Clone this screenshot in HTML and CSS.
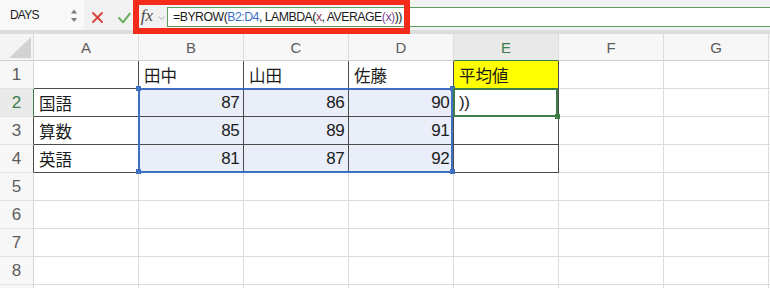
FILE: index.html
```html
<!DOCTYPE html>
<html lang="ja">
<head>
<meta charset="utf-8">
<link rel="stylesheet" href="styles.css">
</head>
<body>
<div class="app">
  <div class="toolbar">
    <div class="namebox">
      <span class="name">DAYS</span>
      <svg class="spin" width="7" height="14" viewBox="0 0 7 14"><polygon points="0,4.5 6,4.5 3,0.5" fill="#7a7a7a"/><polygon points="0,9 6,9 3,13" fill="#7a7a7a"/></svg>
    </div>
    <div class="tb-btn cancel"><svg width="27" height="30" viewBox="0 0 27 30"><path d="M9 13 L18 22 M18 13 L9 22" stroke="#d8433c" stroke-width="1.9" stroke-linecap="round"/></svg></div>
    <div class="tb-btn ok"><svg width="26" height="30" viewBox="0 0 26 30"><path d="M8 18 L12 22.3 L18.8 13.6" fill="none" stroke="#62ae55" stroke-width="1.9" stroke-linecap="round" stroke-linejoin="round"/></svg></div>
    <div class="fx">fx</div>
    <div class="chev"><svg width="9" height="30" viewBox="0 0 9 30"><path d="M1.5 16.5 L4.5 19.5 L7.5 16.5" fill="none" stroke="#b0b0b0" stroke-width="1"/></svg></div>
    <div class="formula"><span>=BYROW(</span><span class="ref">B2:D4</span><span>, LAMBDA(</span><span class="var1">x</span><span>, AVERAGE</span><span class="var2">(x)</span><span>))</span></div>
  </div>
  <div class="redbox"></div>

  <div class="sheet">
    <div class="c corner"><svg width="33" height="26" viewBox="0 0 33 26"><polygon points="9,24 31,24 31,3" fill="#d2d2d2"/></svg></div>
    <div class="c ch">A</div>
    <div class="c ch">B</div>
    <div class="c ch">C</div>
    <div class="c ch">D</div>
    <div class="c ch ch-act">E</div>
    <div class="c ch">F</div>
    <div class="c ch">G</div>
    <div class="c ch last"></div>

    <div class="c rh">1</div>
    <div class="c dr db"></div>
    <div class="c dr db">田中</div>
    <div class="c dr db">山田</div>
    <div class="c dr db">佐藤</div>
    <div class="c dr db yellow">平均値</div>
    <div class="c"></div>
    <div class="c"></div>
    <div class="c last"></div>

    <div class="c rh rh-act">2</div>
    <div class="c dr db">国語</div>
    <div class="c dr db sel num">87</div>
    <div class="c dr db sel num">86</div>
    <div class="c dr db sel num">90</div>
    <div class="c dr db paren">))</div>
    <div class="c"></div>
    <div class="c"></div>
    <div class="c last"></div>

    <div class="c rh rh-dark">3</div>
    <div class="c dr db">算数</div>
    <div class="c dr db sel num">85</div>
    <div class="c dr db sel num">89</div>
    <div class="c dr db sel num">91</div>
    <div class="c dr db"></div>
    <div class="c"></div>
    <div class="c"></div>
    <div class="c last"></div>

    <div class="c rh rh-dark">4</div>
    <div class="c dr db">英語</div>
    <div class="c dr db sel num">81</div>
    <div class="c dr db sel num">87</div>
    <div class="c dr db sel num">92</div>
    <div class="c dr db"></div>
    <div class="c"></div>
    <div class="c"></div>
    <div class="c last"></div>

    <div class="c rh">5</div>
    <div class="c"></div><div class="c"></div><div class="c"></div><div class="c"></div><div class="c"></div><div class="c"></div><div class="c"></div><div class="c last"></div>

    <div class="c rh">6</div>
    <div class="c"></div><div class="c"></div><div class="c"></div><div class="c"></div><div class="c"></div><div class="c"></div><div class="c"></div><div class="c last"></div>

    <div class="c rh">7</div>
    <div class="c"></div><div class="c"></div><div class="c"></div><div class="c"></div><div class="c"></div><div class="c"></div><div class="c"></div><div class="c last"></div>

    <div class="c rh">8</div>
    <div class="c"></div><div class="c"></div><div class="c"></div><div class="c"></div><div class="c"></div><div class="c"></div><div class="c"></div><div class="c last"></div>

    <div class="c rh"></div>
    <div class="c"></div><div class="c"></div><div class="c"></div><div class="c"></div><div class="c"></div><div class="c"></div><div class="c"></div><div class="c last"></div>

    <div class="selbox"></div>
    <div class="handle blue h-tl"></div>
    <div class="handle blue h-tr"></div>
    <div class="handle blue h-bl"></div>
    <div class="handle blue h-br"></div>
    <div class="actbox"></div>
    <div class="handle green h-act"></div>
  </div>
</div>
</body>
</html>
```

FILE: styles.css
```css
* { box-sizing: border-box; }
html, body { margin: 0; padding: 0; background: #ffffff; }
body { width: 770px; height: 288px; overflow: hidden; font-family: "Liberation Sans", "Noto Sans CJK JP", sans-serif; }
.app { position: relative; width: 770px; height: 288px; overflow: hidden; }

.toolbar {
  display: flex;
  height: 34px;
  background: #f1f1f1;
  border-bottom: 4px solid #dcdcdc;
}
.namebox {
  width: 84px;
  height: 30px;
  display: flex;
  align-items: center;
  justify-content: space-between;
  padding: 0 6px 0 10px;
  background: #f8f8f8;
}
.name { font-size: 12px; letter-spacing: -0.8px; color: #1a1a1a; }
.spin { display: block; margin-top: 1px; }
.tb-btn { height: 30px; }
.tb-btn svg { display: block; }
.cancel { width: 27px; }
.ok { width: 26px; }
.fx {
  width: 20px;
  height: 30px;
  display: flex;
  align-items: center;
  justify-content: center;
  padding-top: 2px;
  font-family: "Liberation Serif", serif;
  font-style: italic;
  font-size: 17px;
  color: #4a4a4a;
}
.chev { width: 9px; height: 30px; }
.chev svg { display: block; }
.formula {
  flex: 1;
  margin: 7px 0 0 1px;
  height: 20px;
  background: #ffffff;
  border: 1px solid #5f9b5f;
  border-right: none;
  padding-left: 5px;
  display: flex;
  align-items: center;
  font-size: 12.3px;
  letter-spacing: -0.5px;
  color: #1a1a1a;
  white-space: pre;
}
.formula .ref { color: #3a6fc4; }
.formula .var1 { color: #8e3a5e; }
.formula .var2 { color: #7b4597; }

.redbox {
  position: absolute;
  left: 133px;
  top: 0;
  width: 277px;
  height: 34px;
  border: 6px solid #f42a1a;
  border-top-width: 5px;
  pointer-events: none;
}

.sheet {
  position: relative;
  display: grid;
  grid-template-columns: 34px repeat(7, 105px) 1px;
  grid-template-rows: 27px repeat(9, 28px);
}
.c {
  border-right: 1px solid #dcdcdc;
  border-bottom: 1px solid #dcdcdc;
  display: flex;
  align-items: center;
  padding: 0 4px 0 5px;
  font-size: 16.5px;
  color: #1c1c1c;
  white-space: nowrap;
  overflow: hidden;
}
.c.last { border-right: none; padding: 0; }
.corner { background: #f4f4f4; padding: 0; border-bottom-color: #d0d0d0; }
.corner svg { display: block; }
.ch {
  background: #f7f7f7;
  justify-content: center;
  padding: 0;
  font-size: 15px;
  color: #5c5c5c;
  border-bottom-color: #cfcfcf;
  border-right-color: #dedede;
}
.ch-act {
  background: #e9e9e9;
  color: #3b7c47;
  border-bottom-color: #3e7a45;
}
.rh {
  background: #f7f7f7;
  justify-content: center;
  padding: 0;
  font-size: 17px;
  color: #5c5c5c;
  border-right-color: #d4d4d4;
  border-bottom-color: #e2e2e2;
}
.rh-act { background: #e9e9e9; color: #3b7c47; border-right-color: #3e7a45; }
.rh-dark { border-right-color: #4c4c4c; }
.dr { border-right-color: #4c4c4c; }
.db { border-bottom-color: #4c4c4c; }
.sel { background: #e9eef8; }
.num { justify-content: flex-end; padding-right: 4px; font-size: 17px; letter-spacing: -0.6px; }
.yellow { background: #ffff00; }
.paren { font-size: 17px; letter-spacing: -0.5px; }

.selbox {
  position: absolute;
  left: 138px;
  top: 54px;
  width: 315px;
  height: 85px;
  border: 2px solid #3f6fc0;
  pointer-events: none;
}
.actbox {
  position: absolute;
  left: 453px;
  top: 54px;
  width: 105px;
  height: 29px;
  border: 2px solid #3e7d45;
  pointer-events: none;
}
.handle { position: absolute; width: 5px; height: 5px; }
.handle.blue { background: #3f6fc0; }
.handle.green { background: #3e7d45; }
.h-tl { left: 136px; top: 52px; }
.h-tr { left: 450px; top: 52px; }
.h-bl { left: 136px; top: 135px; }
.h-br { left: 450px; top: 135px; }
.h-act { left: 555px; top: 80px; }
```
